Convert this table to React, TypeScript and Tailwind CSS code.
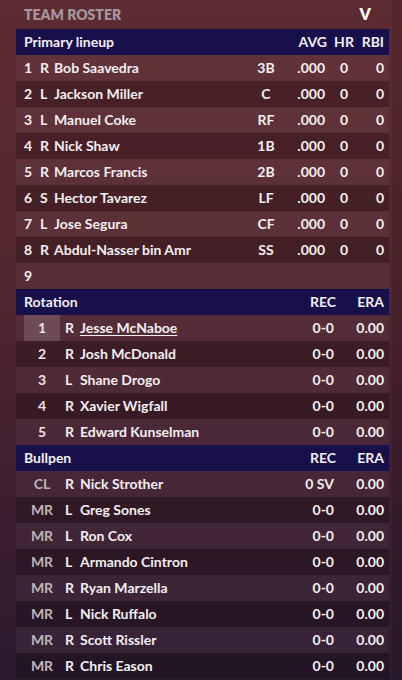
const lineup = [
  { n: '1', h: 'R', name: 'Bob Saavedra', pos: '3B' },
  { n: '2', h: 'L', name: 'Jackson Miller', pos: 'C' },
  { n: '3', h: 'L', name: 'Manuel Coke', pos: 'RF' },
  { n: '4', h: 'R', name: 'Nick Shaw', pos: '1B' },
  { n: '5', h: 'R', name: 'Marcos Francis', pos: '2B' },
  { n: '6', h: 'S', name: 'Hector Tavarez', pos: 'LF' },
  { n: '7', h: 'L', name: 'Jose Segura', pos: 'CF' },
  { n: '8', h: 'R', name: 'Abdul-Nasser bin Amr', pos: 'SS' },
];

const rotation = [
  { n: '1', h: 'R', name: 'Jesse McNaboe' },
  { n: '2', h: 'R', name: 'Josh McDonald' },
  { n: '3', h: 'L', name: 'Shane Drogo' },
  { n: '4', h: 'R', name: 'Xavier Wigfall' },
  { n: '5', h: 'R', name: 'Edward Kunselman' },
];

const bullpen = [
  { role: 'CL', h: 'R', name: 'Nick Strother', rec: '0 SV' },
  { role: 'MR', h: 'L', name: 'Greg Sones', rec: '0-0' },
  { role: 'MR', h: 'L', name: 'Ron Cox', rec: '0-0' },
  { role: 'MR', h: 'L', name: 'Armando Cintron', rec: '0-0' },
  { role: 'MR', h: 'R', name: 'Ryan Marzella', rec: '0-0' },
  { role: 'MR', h: 'L', name: 'Nick Ruffalo', rec: '0-0' },
  { role: 'MR', h: 'R', name: 'Scott Rissler', rec: '0-0' },
  { role: 'MR', h: 'R', name: 'Chris Eason', rec: '0-0' },
];

// odd rows sit on the background, even rows get a dark band
function stripe(i: number) {
  return i % 2 === 0 ? 'bg-white/[0.04]' : 'bg-black/20';
}

export default function App() {
  return (
    <div className="relative h-[680px] w-[402px] overflow-hidden bg-[linear-gradient(180deg,#5d2b31_0%,#55282f_35%,#46212f_60%,#2b1a2f_100%)] font-['Lato',sans-serif] text-[14px] font-bold text-[#f3eef0]">
      <div className="absolute right-0 top-0 h-full w-[10px] bg-black/10" />
      <div className="flex h-[29px] items-center justify-between pb-px pl-6 pr-[31px]">
        <span className="text-[14px] font-extrabold text-[#a3969b]">TEAM ROSTER</span>
        <span className="text-[16px] font-extrabold text-white">V</span>
      </div>

      <div className="ml-4 mr-[13px]">
        <div className="flex h-[26px] items-center bg-[#17104b] pb-px pl-2 pr-[5px]">
          <span className="flex-1">Primary lineup</span>
          <span className="w-[46px] text-right">AVG</span>
          <span className="w-[34px] text-center">HR</span>
          <span className="w-[23px] text-right">RBI</span>
        </div>
        {lineup.map((p, i) => (
          <div key={p.n} className={`flex h-[26px] items-center pb-px pl-2 pr-[5px] ${stripe(i)}`}>
            <span className="w-4">{p.n}</span>
            <span className="w-[14px]">{p.h}</span>
            <span className="flex-1">{p.name}</span>
            <span className="w-[30px] text-center">{p.pos}</span>
            <span className="w-[44px] text-right">.000</span>
            <span className="w-[38px] text-center">0</span>
            <span className="w-[21px] text-right">0</span>
          </div>
        ))}
        <div className={`flex h-[26px] items-center pb-px pl-2 ${stripe(8)}`}>
          <span>9</span>
        </div>

        <div className="flex h-[26px] items-center bg-[#17104b] pb-px pl-2 pr-[5px]">
          <span className="flex-1">Rotation</span>
          <span className="w-[44px] text-right">REC</span>
          <span className="w-[48px] text-right">ERA</span>
        </div>
        {rotation.map((p, i) => (
          <div key={p.n} className={`flex h-[26px] items-center pl-2 pr-[5px] ${stripe(i)}`}>
            <span
              className={`flex h-full w-9 items-center justify-center pb-px text-[#ebe5e8] ${i === 0 ? 'bg-white/15' : ''}`}
            >
              {p.n}
            </span>
            <span className="ml-[5px] w-[15px] pb-px">{p.h}</span>
            <span className={`flex-1 pb-px ${i === 0 ? 'underline underline-offset-2' : ''}`}>{p.name}</span>
            <span className="w-[44px] pb-px text-right">0-0</span>
            <span className="w-[50px] pb-px text-right">0.00</span>
          </div>
        ))}

        <div className="flex h-[26px] items-center bg-[#17104b] pb-px pl-2 pr-[5px]">
          <span className="flex-1">Bullpen</span>
          <span className="w-[44px] text-right">REC</span>
          <span className="w-[48px] text-right">ERA</span>
        </div>
        {bullpen.map((p, i) => (
          <div key={p.name} className={`flex h-[26px] items-center pb-px pl-2 pr-[5px] ${stripe(i)}`}>
            <span className="w-9 text-center text-[#bdb4b8]">{p.role}</span>
            <span className="ml-[5px] w-[15px]">{p.h}</span>
            <span className="flex-1">{p.name}</span>
            <span className="w-[44px] text-right">{p.rec}</span>
            <span className="w-[50px] text-right">0.00</span>
          </div>
        ))}
      </div>
    </div>
  );
}
